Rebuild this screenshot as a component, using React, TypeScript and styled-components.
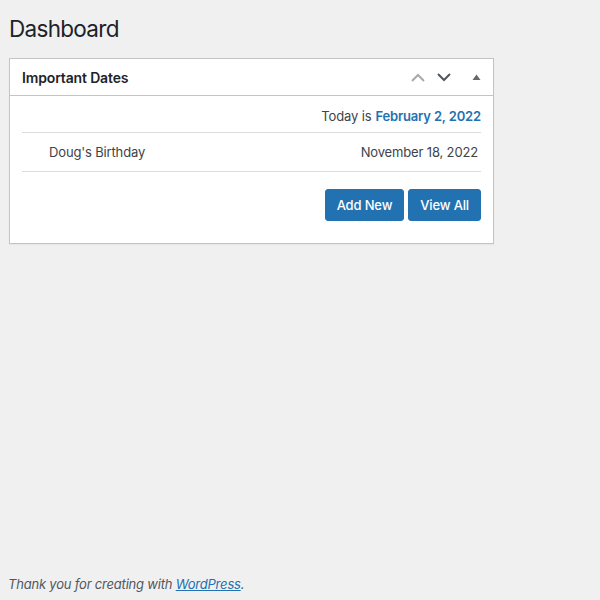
import styled, { createGlobalStyle } from 'styled-components';

const GlobalStyle = createGlobalStyle`
  html, body {
    margin: 0;
    padding: 0;
    background: #f0f0f1;
    font-family: Inter, "Noto Sans", "Liberation Sans", sans-serif;
    color: #3c434a;
    font-size: 13px;
    letter-spacing: -0.15px;
  }
  #root {
    min-height: 600px;
  }
`;

const Page = styled.div`
  height: 600px;
  display: flex;
  flex-direction: column;
  padding: 0 0 0 9px;
  box-sizing: border-box;
`;

const Heading = styled.h1`
  margin: 0;
  padding: 14px 0 0;
  font-size: 22.5px;
  font-weight: 400;
  line-height: 30px;
  letter-spacing: -0.7px;
  color: #1d2327;
`;

const Postbox = styled.section`
  margin-top: 14px;
  width: 485px;
  box-sizing: border-box;
  background: #fff;
  border: 1px solid #c3c4c7;
  box-shadow: 0 1px 1px rgba(0, 0, 0, 0.04);
`;

const Header = styled.header`
  height: 36px;
  display: flex;
  align-items: center;
  justify-content: space-between;
  padding: 0 0 0 12px;
  border-bottom: 1px solid #c3c4c7;
`;

const Title = styled.h2`
  margin: 0;
  font-size: 14px;
  font-weight: 600;
  color: #1d2327;
`;

const Handles = styled.div`
  display: flex;
  align-items: center;
  height: 100%;
`;

const HandleButton = styled.button<{ $w: number }>`
  width: ${(p) => p.$w}px;
  height: 36px;
  padding: 0;
  border: 0;
  background: none;
  display: flex;
  align-items: center;
  justify-content: center;
  cursor: pointer;
`;

const Inside = styled.div`
  padding: 0 12px 22px;
`;

const TodayRow = styled.div`
  height: 37px;
  padding-top: 4px;
  box-sizing: border-box;
  display: flex;
  align-items: center;
  justify-content: flex-end;
  border-bottom: 1px solid #dcdcde;
  color: #3c434a;
`;

const TodayDate = styled.a`
  color: #2271b1;
  font-weight: 600;
  text-decoration: none;
  margin-left: 4px;
`;

const EventRow = styled.div`
  height: 38px;
  display: flex;
  align-items: center;
  justify-content: space-between;
  padding: 0 3px 0 27px;
  border-bottom: 1px solid #dcdcde;
`;

const Actions = styled.div`
  display: flex;
  justify-content: flex-end;
  gap: 4px;
  margin-top: 17px;
`;

const Button = styled.button`
  height: 32px;
  padding: 0 11px;
  background: #2271b1;
  color: #fff;
  border: 1px solid #2271b1;
  border-radius: 3px;
  font-family: inherit;
  font-size: 13px;
  font-weight: 500;
  letter-spacing: -0.15px;
  cursor: pointer;
`;

const Footer = styled.footer`
  margin-top: auto;
  padding: 0 0 8px;
  margin-left: -1px;
  font-style: italic;
  font-size: 13px;
  line-height: 16px;
  letter-spacing: -0.2px;
  color: #50575e;
  a {
    color: #2271b1;
  }
`;

export default function App() {
  return (
    <>
      <GlobalStyle />
      <Page>
        <Heading>Dashboard</Heading>
        <Postbox>
          <Header>
            <Title>Important Dates</Title>
            <Handles>
              <HandleButton $w={22} aria-label="Move up">
                <svg width="14" height="9" viewBox="0 0 14 9">
                  <path d="M1 8 L7 2 L13 8" fill="none" stroke="#a7aaad" strokeWidth="2" />
                </svg>
              </HandleButton>
              <HandleButton $w={30} aria-label="Move down">
                <svg width="14" height="9" viewBox="0 0 14 9">
                  <path d="M1 1 L7 7 L13 1" fill="none" stroke="#50575e" strokeWidth="2" />
                </svg>
              </HandleButton>
              <HandleButton $w={34} aria-label="Toggle panel">
                <svg width="9" height="6" viewBox="0 0 9 6">
                  <path d="M0.5 6 L4.5 0.5 L8.5 6 Z" fill="#646970" />
                </svg>
              </HandleButton>
            </Handles>
          </Header>
          <Inside>
            <TodayRow>
              Today is <TodayDate href="#">February 2, 2022</TodayDate>
            </TodayRow>
            <EventRow>
              <span>Doug's Birthday</span>
              <span>November 18, 2022</span>
            </EventRow>
            <Actions>
              <Button>Add New</Button>
              <Button>View All</Button>
            </Actions>
          </Inside>
        </Postbox>
        <Footer>
          Thank you for creating with <a href="#">WordPress</a>.
        </Footer>
      </Page>
    </>
  );
}
